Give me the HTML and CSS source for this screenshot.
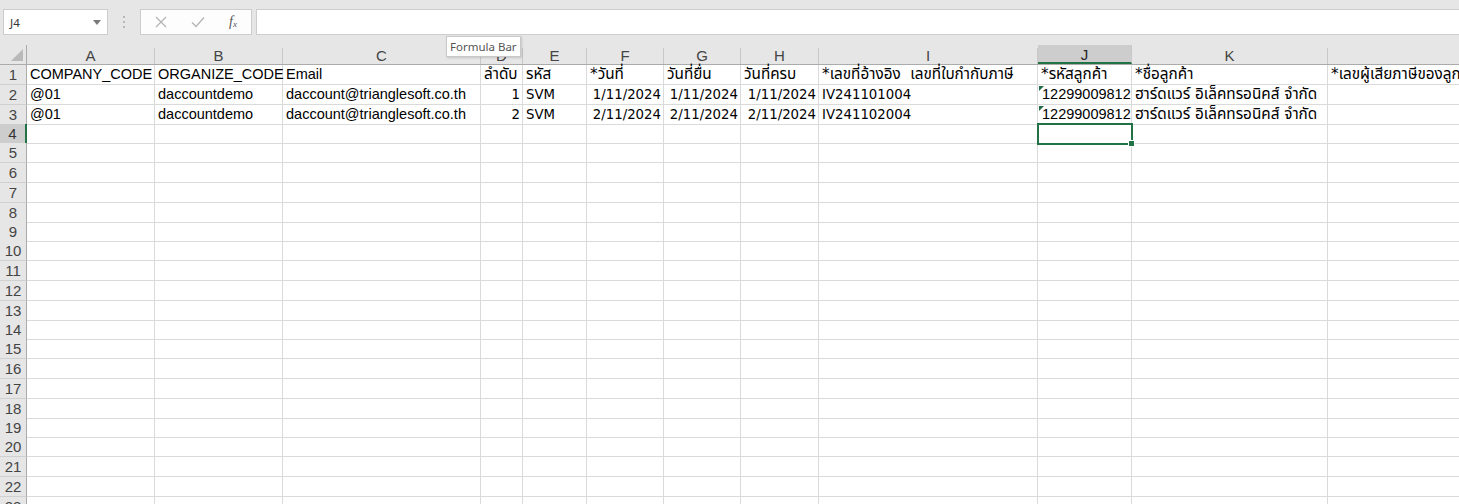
FILE: index.html
```html
<!DOCTYPE html>
<html>
<head>
<meta charset="utf-8">
<link rel="stylesheet" href="styles.css">
</head>
<body>
<div class="app">
  <div class="toolbar">
    <div class="namebox"><span class="ref">J4</span><svg class="dd" width="8" height="5" viewBox="0 0 8 5"><path d="M0 0H8L4 5Z" fill="#7a7a7a"/></svg></div>
    <div class="grip"><span></span><span></span><span></span></div>
    <div class="fnbox">
      <svg class="ic" width="12" height="12" viewBox="0 0 12 12"><path d="M1 1L11 11M11 1L1 11" stroke="#b4b4b4" stroke-width="1.3" fill="none"/></svg>
      <svg class="ic" width="14" height="12" viewBox="0 0 14 12"><path d="M1 6.5L5 10.5L13 1.5" stroke="#b4b4b4" stroke-width="1.3" fill="none"/></svg>
      <span class="fx">f<sub>x</sub></span>
    </div>
    <div class="formula"></div>
  </div>
  <div class="tip">Formula Bar</div>
  <div class="sheet">
    <div class="hrow">
      <div class="corner"><svg width="12" height="12" viewBox="0 0 12 12"><path d="M12 0V12H0Z" fill="#b9b9b9"/></svg></div>
      <div class="ch">A</div><div class="ch">B</div><div class="ch">C</div><div class="ch">D</div><div class="ch">E</div><div class="ch">F</div><div class="ch">G</div><div class="ch">H</div><div class="ch">I</div><div class="ch selc">J</div><div class="ch">K</div><div class="ch">L</div>
    </div>
    <div class="row">
      <div class="rh">1</div>
      <div class="c">COMPANY_CODE</div><div class="c">ORGANIZE_CODE</div><div class="c">Email</div><div class="c th">ลำดับ</div><div class="c th">รหัส</div><div class="c th">*วันที่</div><div class="c th">วันที่ยื่น</div><div class="c th">วันที่ครบ</div><div class="c th">*เลขที่อ้างอิง&nbsp;&nbsp;เลขที่ใบกำกับภาษี</div><div class="c th">*รหัสลูกค้า</div><div class="c th">*ชื่อลูกค้า</div><div class="c th">*เลขผู้เสียภาษีของลูกค้า</div>
    </div>
    <div class="row">
      <div class="rh">2</div>
      <div class="c">@01</div><div class="c">daccountdemo</div><div class="c">daccount@trianglesoft.co.th</div><div class="c t r">1</div><div class="c t">SVM</div><div class="c t r">1/11/2024</div><div class="c t r">1/11/2024</div><div class="c t r">1/11/2024</div><div class="c t">IV241101004</div><div class="c num">12299009812</div><div class="c th">ฮาร์ดแวร์ อิเล็คทรอนิคส์ จำกัด</div><div class="c"></div>
    </div>
    <div class="row">
      <div class="rh">3</div>
      <div class="c">@01</div><div class="c">daccountdemo</div><div class="c">daccount@trianglesoft.co.th</div><div class="c t r">2</div><div class="c t">SVM</div><div class="c t r">2/11/2024</div><div class="c t r">2/11/2024</div><div class="c t r">2/11/2024</div><div class="c t">IV241102004</div><div class="c num">12299009812</div><div class="c th">ฮาร์ดแวร์ อิเล็คทรอนิคส์ จำกัด</div><div class="c"></div>
    </div>
    <div class="row">
      <div class="rh selr">4</div>
      <div class="c"></div><div class="c"></div><div class="c"></div><div class="c"></div><div class="c"></div><div class="c"></div><div class="c"></div><div class="c"></div><div class="c"></div><div class="c sel"><span class="handle"></span></div><div class="c"></div><div class="c"></div>
    </div>
    <div class="row"><div class="rh">5</div><div class="c"></div><div class="c"></div><div class="c"></div><div class="c"></div><div class="c"></div><div class="c"></div><div class="c"></div><div class="c"></div><div class="c"></div><div class="c"></div><div class="c"></div><div class="c"></div></div>
    <div class="row"><div class="rh">6</div><div class="c"></div><div class="c"></div><div class="c"></div><div class="c"></div><div class="c"></div><div class="c"></div><div class="c"></div><div class="c"></div><div class="c"></div><div class="c"></div><div class="c"></div><div class="c"></div></div>
    <div class="row"><div class="rh">7</div><div class="c"></div><div class="c"></div><div class="c"></div><div class="c"></div><div class="c"></div><div class="c"></div><div class="c"></div><div class="c"></div><div class="c"></div><div class="c"></div><div class="c"></div><div class="c"></div></div>
    <div class="row"><div class="rh">8</div><div class="c"></div><div class="c"></div><div class="c"></div><div class="c"></div><div class="c"></div><div class="c"></div><div class="c"></div><div class="c"></div><div class="c"></div><div class="c"></div><div class="c"></div><div class="c"></div></div>
    <div class="row"><div class="rh">9</div><div class="c"></div><div class="c"></div><div class="c"></div><div class="c"></div><div class="c"></div><div class="c"></div><div class="c"></div><div class="c"></div><div class="c"></div><div class="c"></div><div class="c"></div><div class="c"></div></div>
    <div class="row"><div class="rh">10</div><div class="c"></div><div class="c"></div><div class="c"></div><div class="c"></div><div class="c"></div><div class="c"></div><div class="c"></div><div class="c"></div><div class="c"></div><div class="c"></div><div class="c"></div><div class="c"></div></div>
    <div class="row"><div class="rh">11</div><div class="c"></div><div class="c"></div><div class="c"></div><div class="c"></div><div class="c"></div><div class="c"></div><div class="c"></div><div class="c"></div><div class="c"></div><div class="c"></div><div class="c"></div><div class="c"></div></div>
    <div class="row"><div class="rh">12</div><div class="c"></div><div class="c"></div><div class="c"></div><div class="c"></div><div class="c"></div><div class="c"></div><div class="c"></div><div class="c"></div><div class="c"></div><div class="c"></div><div class="c"></div><div class="c"></div></div>
    <div class="row"><div class="rh">13</div><div class="c"></div><div class="c"></div><div class="c"></div><div class="c"></div><div class="c"></div><div class="c"></div><div class="c"></div><div class="c"></div><div class="c"></div><div class="c"></div><div class="c"></div><div class="c"></div></div>
    <div class="row"><div class="rh">14</div><div class="c"></div><div class="c"></div><div class="c"></div><div class="c"></div><div class="c"></div><div class="c"></div><div class="c"></div><div class="c"></div><div class="c"></div><div class="c"></div><div class="c"></div><div class="c"></div></div>
    <div class="row"><div class="rh">15</div><div class="c"></div><div class="c"></div><div class="c"></div><div class="c"></div><div class="c"></div><div class="c"></div><div class="c"></div><div class="c"></div><div class="c"></div><div class="c"></div><div class="c"></div><div class="c"></div></div>
    <div class="row"><div class="rh">16</div><div class="c"></div><div class="c"></div><div class="c"></div><div class="c"></div><div class="c"></div><div class="c"></div><div class="c"></div><div class="c"></div><div class="c"></div><div class="c"></div><div class="c"></div><div class="c"></div></div>
    <div class="row"><div class="rh">17</div><div class="c"></div><div class="c"></div><div class="c"></div><div class="c"></div><div class="c"></div><div class="c"></div><div class="c"></div><div class="c"></div><div class="c"></div><div class="c"></div><div class="c"></div><div class="c"></div></div>
    <div class="row"><div class="rh">18</div><div class="c"></div><div class="c"></div><div class="c"></div><div class="c"></div><div class="c"></div><div class="c"></div><div class="c"></div><div class="c"></div><div class="c"></div><div class="c"></div><div class="c"></div><div class="c"></div></div>
    <div class="row"><div class="rh">19</div><div class="c"></div><div class="c"></div><div class="c"></div><div class="c"></div><div class="c"></div><div class="c"></div><div class="c"></div><div class="c"></div><div class="c"></div><div class="c"></div><div class="c"></div><div class="c"></div></div>
    <div class="row"><div class="rh">20</div><div class="c"></div><div class="c"></div><div class="c"></div><div class="c"></div><div class="c"></div><div class="c"></div><div class="c"></div><div class="c"></div><div class="c"></div><div class="c"></div><div class="c"></div><div class="c"></div></div>
    <div class="row"><div class="rh">21</div><div class="c"></div><div class="c"></div><div class="c"></div><div class="c"></div><div class="c"></div><div class="c"></div><div class="c"></div><div class="c"></div><div class="c"></div><div class="c"></div><div class="c"></div><div class="c"></div></div>
    <div class="row"><div class="rh">22</div><div class="c"></div><div class="c"></div><div class="c"></div><div class="c"></div><div class="c"></div><div class="c"></div><div class="c"></div><div class="c"></div><div class="c"></div><div class="c"></div><div class="c"></div><div class="c"></div></div>
    <div class="row"><div class="rh">23</div><div class="c"></div><div class="c"></div><div class="c"></div><div class="c"></div><div class="c"></div><div class="c"></div><div class="c"></div><div class="c"></div><div class="c"></div><div class="c"></div><div class="c"></div><div class="c"></div></div>
  </div>
</div>
</body>
</html>
```
FILE: styles.css
```css
html, body {
  margin: 0;
  padding: 0;
  width: 1459px;
  height: 504px;
  overflow: hidden;
  background: #ffffff;
}
.app {
  position: relative;
  width: 1459px;
  height: 504px;
  overflow: hidden;
  font-family: "Liberation Sans", Arial, "Noto Sans Thai", sans-serif;
}
.toolbar {
  background: #e6e6e6;
  height: 45px;
  box-sizing: border-box;
  padding: 9px 0 0 3px;
  display: flex;
  align-items: flex-start;
}
.namebox {
  width: 105px;
  height: 26px;
  box-sizing: border-box;
  background: #fff;
  border: 1px solid #cdcdcd;
  display: flex;
  align-items: center;
  justify-content: space-between;
  padding: 0 6px 0 6px;
}
.ref {
  font-family: "Noto Sans", "Liberation Sans", sans-serif;
  font-size: 11.5px;
  color: #333;
}
.grip {
  width: 32px;
  height: 26px;
  display: flex;
  flex-direction: column;
  align-items: center;
  justify-content: center;
  gap: 3px;
}
.grip span {
  width: 2px;
  height: 2px;
  background: #b8b8b8;
}
.fnbox {
  width: 112px;
  height: 26px;
  box-sizing: border-box;
  background: #fdfdfd;
  border: 1px solid #cdcdcd;
  display: flex;
  align-items: center;
  padding-left: 14px;
  gap: 24px;
}
.fx {
  font-family: "Liberation Serif", serif;
  font-style: italic;
  font-size: 14px;
  color: #555;
}
.fx sub {
  font-size: 9px;
  vertical-align: -1px;
}
.formula {
  flex: 1;
  height: 26px;
  box-sizing: border-box;
  margin-left: 4px;
  background: #fff;
  border: 1px solid #cdcdcd;
  border-right: none;
}
.tip {
  position: absolute;
  left: 446px;
  top: 36px;
  height: 21px;
  box-sizing: border-box;
  padding: 0 3px;
  background: #fff;
  border: 1px solid #c8c8c8;
  box-shadow: 1px 1px 2px rgba(0,0,0,0.15);
  font-family: "Noto Sans", "Liberation Sans", sans-serif;
  font-size: 11.5px;
  line-height: 19px;
  color: #555;
  z-index: 5;
}
.sheet {
  width: 1600px;
}
.hrow, .row {
  display: grid;
  grid-template-columns: 27px 128px 128px 198px 42px 64px 77px 77px 78px 219px 94px 196px 272px;
}
.hrow {
  height: 19px;
  background: #e6e6e6;
  border-bottom: 1px solid #ababab;
}
.corner {
  display: flex;
  align-items: flex-end;
  justify-content: flex-end;
  padding: 0 3px 3px 0;
  border-right: 1px solid #ababab;
}
.ch {
  box-sizing: border-box;
  border-right: 1px solid #c9c9c9;
  margin-top: 3px;
  text-align: center;
  font-size: 15px;
  line-height: 16px;
  color: #444;
}
.ch.selc {
  margin-top: 0;
  padding-top: 3px;
  background-color: #d6d6d6;
  background-image: radial-gradient(circle, #c2c2c2 0.6px, transparent 0.8px);
  background-size: 2px 2px;
  border-bottom: 2px solid #217346;
  color: #262626;
  line-height: 14px;
}
.row {
  height: 20px;
}
.row:nth-child(5n), .row:nth-child(5n+4) {
  height: 19px;
}
.rh {
  box-sizing: border-box;
  background: #e6e6e6;
  border-right: 1px solid #ababab;
  border-bottom: 1px solid #d0d0d0;
  text-align: center;
  font-size: 15px;
  line-height: 19px;
  color: #444;
}
.rh.selr {
  background-color: #d6d6d6;
  background-image: radial-gradient(circle, #c2c2c2 0.6px, transparent 0.8px);
  background-size: 2px 2px;
  border-right: 2px solid #217346;
  color: #333;
}
.c {
  box-sizing: border-box;
  position: relative;
  border-right: 1px solid #dadada;
  border-bottom: 1px solid #dadada;
  padding: 0 2px 0 3px;
  white-space: nowrap;
  font-size: 14.5px;
  line-height: 19px;
  color: #000;
  overflow: visible;
  min-width: 0;
}
.c.t {
  font-family: "DejaVu Sans", "Noto Sans Thai", "Noto Sans", sans-serif;
  font-size: 13.3px;
}
.c.th {
  font-family: "DejaVu Sans", "Noto Sans Thai", "Noto Sans", sans-serif;
  font-size: 15.3px;
}
.c.r {
  text-align: right;
}
.c.num {
  padding-left: 4px;
}
.c.num::before {
  content: "";
  position: absolute;
  left: 1px;
  top: 1px;
  border-top: 5px solid #1f6b46;
  border-right: 5px solid transparent;
}
.c.sel {
  outline: 2px solid #217346;
  outline-offset: -1px;
  z-index: 2;
}
.handle {
  position: absolute;
  right: -4px;
  bottom: -4px;
  width: 5px;
  height: 5px;
  background: #217346;
  border: 1px solid #fff;
}
```
